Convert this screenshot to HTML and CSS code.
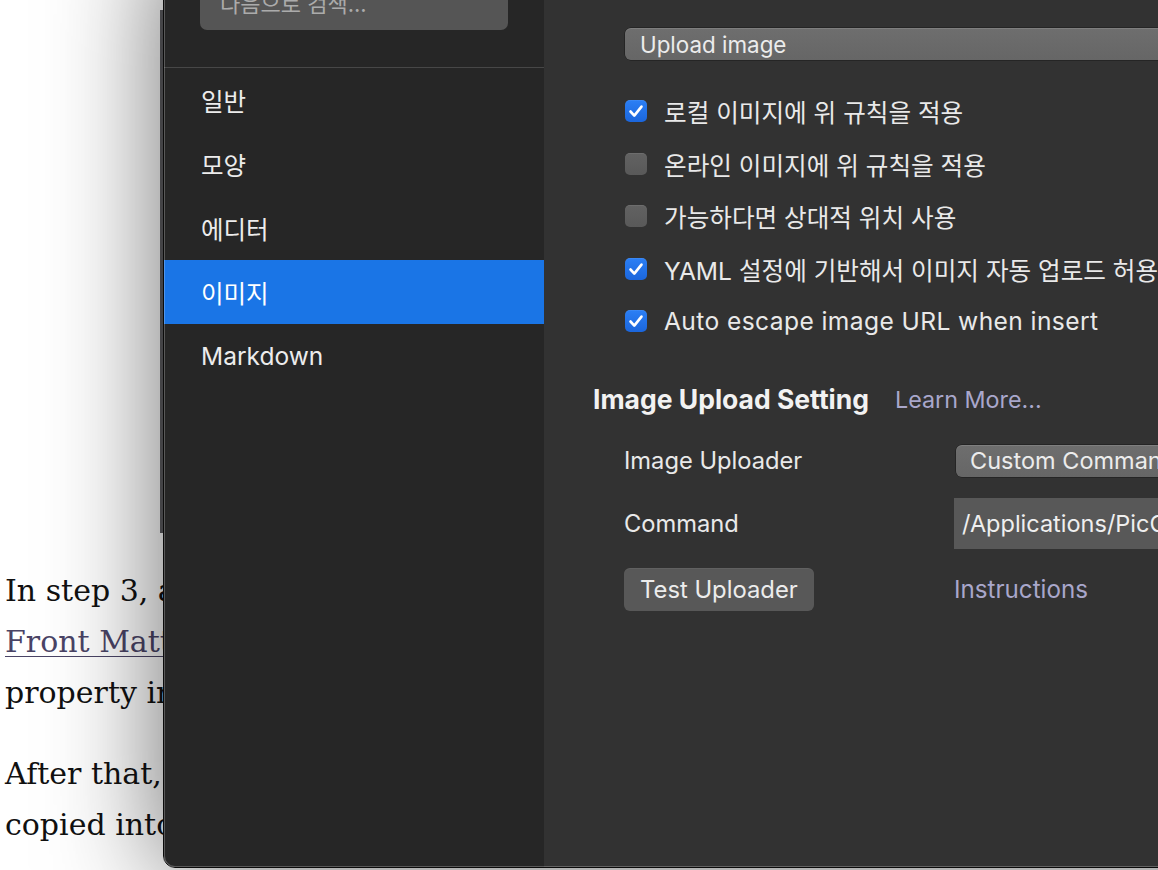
FILE: index.html
```html
<!DOCTYPE html>
<html lang="ko">
<head>
<meta charset="utf-8">
<title>Typora Preferences</title>
<link rel="stylesheet" href="styles.css">
</head>
<body>
<div class="page">
  <div class="strip"></div>
  <p class="para">In step 3, after images are uploaded, Typora reads the<br><a class="doc-link" href="#">Front Matter</a> of the document and checks the typora-copy-images-to<br>property in it, then applies the upload rules.</p>
  <p class="para">After that, images inserted into the document will be<br>copied into the configured folder and uploaded.</p>
</div>

<div class="window">
  <aside class="sidebar">
    <div class="search">다음으로 검색...</div>
    <div class="divider"></div>
    <nav class="nav">
      <div class="nav-item">일반</div>
      <div class="nav-item">모양</div>
      <div class="nav-item">에디터</div>
      <div class="nav-item active">이미지</div>
      <div class="nav-item">Markdown</div>
    </nav>
  </aside>
  <main class="content">
    <div class="cut-label">이미지를 삽입할 때...</div>
    <div class="select select-wide">Upload image</div>
    <ul class="checks">
      <li class="check-row"><span class="cb on"><svg viewBox="0 0 22 22" width="22" height="22"><path d="M5.5 11.5 L9.3 15.6 L16.5 6.6" fill="none" stroke="#fff" stroke-width="2.6" stroke-linecap="round" stroke-linejoin="round"/></svg></span><span class="check-label">로컬 이미지에 위 규칙을 적용</span></li>
      <li class="check-row"><span class="cb"></span><span class="check-label">온라인 이미지에 위 규칙을 적용</span></li>
      <li class="check-row"><span class="cb"></span><span class="check-label">가능하다면 상대적 위치 사용</span></li>
      <li class="check-row"><span class="cb on"><svg viewBox="0 0 22 22" width="22" height="22"><path d="M5.5 11.5 L9.3 15.6 L16.5 6.6" fill="none" stroke="#fff" stroke-width="2.6" stroke-linecap="round" stroke-linejoin="round"/></svg></span><span class="check-label">YAML 설정에 기반해서 이미지 자동 업로드 허용</span></li>
      <li class="check-row"><span class="cb on"><svg viewBox="0 0 22 22" width="22" height="22"><path d="M5.5 11.5 L9.3 15.6 L16.5 6.6" fill="none" stroke="#fff" stroke-width="2.6" stroke-linecap="round" stroke-linejoin="round"/></svg></span><span class="check-label check-label-latin">Auto escape image URL when insert</span></li>
    </ul>
    <div class="section-title"><span class="section-head">Image Upload Setting</span><a class="ui-link" href="#">Learn More...</a></div>
    <div class="group">
      <div class="grow grow-1"><div class="glabel">Image Uploader</div><div class="select select-cmd">Custom Command</div></div>
      <div class="grow grow-2"><div class="glabel">Command</div><div class="input">/Applications/PicGo.app/Contents/MacOS/PicGo</div></div>
      <div class="grow grow-3"><div class="glabel"><button class="btn">Test Uploader</button></div><a class="ui-link ui-link-lg" href="#">Instructions</a></div>
    </div>
  </main>
</div>
</body>
</html>
```

FILE: styles.css
```css
html, body {
  margin: 0;
  padding: 0;
  background: #ffffff;
  overflow: hidden;
  width: 1158px;
  height: 870px;
}

.page {
  padding-top: 10px;
  padding-left: 5px;
  font-family: "DejaVu Serif", "Liberation Serif", serif;
  font-size: 30px;
  line-height: 51px;
  color: #111111;
}

.strip {
  margin-left: 155px;
  width: 40px;
  height: 523px;
  background: #5e5e62;
}

.para {
  margin: 30px 0 0 0;
  white-space: nowrap;
}

.strip + .para {
  margin-top: 32px;
}

.doc-link {
  color: #4a4466;
  text-decoration: underline;
  text-decoration-thickness: 1px;
  text-underline-offset: 4px;
}

/* ---------- preferences window ---------- */
.window {
  position: absolute;
  left: 163px;
  top: -61px;
  width: 1200px;
  bottom: 2px;
  display: flex;
  border: 1px solid #0b0b0b;
  border-radius: 12px;
  overflow: hidden;
  box-shadow: -4px 6px 110px rgba(0, 0, 0, 0.55);
  font-family: "Inter", "Noto Sans CJK KR", sans-serif;
  color: #e9e9e9;
}

.window::after {
  content: "";
  position: absolute;
  inset: 0;
  border: 1px solid rgba(255, 255, 255, 0.24);
  border-radius: 11px;
  pointer-events: none;
}

.sidebar {
  width: 380px;
  flex: none;
  background: #262626;
  display: flex;
  flex-direction: column;
}

.search {
  margin: 38px 0 0 36px;
  width: 308px;
  height: 52px;
  box-sizing: border-box;
  padding: 11px 0 0 20px;
  background: #555555;
  border-radius: 7px;
  color: #ababab;
  font-size: 22px;
  line-height: 30px;
}

.divider {
  margin-top: 37px;
  height: 1px;
  background: #474747;
}

.nav {
  display: flex;
  flex-direction: column;
}

.nav-item {
  height: 64px;
  display: flex;
  align-items: center;
  padding-left: 37px;
  font-size: 24.5px;
  color: #ececec;
}

.nav-item.active {
  background: #1a75e6;
  color: #ffffff;
}

.content {
  flex: 1;
  background: #323232;
  padding: 33px 0 0 49px;
  display: flex;
  flex-direction: column;
  align-items: flex-start;
}

.cut-label {
  margin-left: 38px;
  font-size: 22px;
  line-height: 30px;
  color: #bdbdbd;
}

.select {
  height: 32px;
  box-sizing: border-box;
  display: flex;
  align-items: center;
  padding-left: 15px;
  background: linear-gradient(#6e6e6e, #666666);
  border-radius: 6px;
  box-shadow: inset 0 1px 0 rgba(255, 255, 255, 0.12), 0 0 0 0.5px rgba(0, 0, 0, 0.5);
  font-size: 22.4px;
  color: #ececec;
}

.select-wide {
  margin: 25px 0 0 32px;
  width: 700px;
}

.checks {
  list-style: none;
  margin: 25px 0 0 32px;
  padding: 0;
}

.check-row {
  height: 52.5px;
  display: flex;
  align-items: center;
  gap: 17px;
  font-size: 24.6px;
  white-space: nowrap;
}

.check-label-latin {
  letter-spacing: 0.4px;
}

.cb {
  width: 22px;
  height: 22px;
  flex: none;
  border-radius: 5px;
  background: linear-gradient(#626262, #595959);
  box-shadow: inset 0 0.5px 0 rgba(255, 255, 255, 0.15);
  display: flex;
}

.cb.on {
  background: linear-gradient(#2b7ff5, #1b66dc);
}

.section-title {
  margin-top: 34.5px;
  height: 34px;
  display: flex;
  align-items: center;
  gap: 26px;
  white-space: nowrap;
}

.section-head {
  font-size: 26.5px;
  font-weight: 700;
  color: #f2f2f2;
}

.ui-link {
  font-size: 23.3px;
  color: #a9a7cb;
  text-decoration: none;
}

.ui-link-lg {
  font-size: 24.2px;
}

.group {
  margin-left: 31px;
  display: flex;
  flex-direction: column;
}

.grow {
  display: flex;
  align-items: center;
  white-space: nowrap;
}

.glabel {
  width: 330px;
  flex: none;
  font-size: 23.7px;
}

.grow-1 {
  margin-top: 29px;
  height: 31px;
}

.grow-2 {
  margin-top: 22px;
  height: 51px;
}

.grow-3 {
  margin-top: 19px;
  height: 43px;
}

.select-cmd {
  margin-left: 2px;
  width: 320px;
  padding-left: 14px;
  font-size: 23.5px;
}

.input {
  align-self: stretch;
  width: 420px;
  display: flex;
  align-items: center;
  padding-left: 8px;
  background: #585858;
  font-size: 23.5px;
  color: #efefef;
}

.btn {
  height: 43px;
  padding: 0 16px;
  border: none;
  border-radius: 6px;
  background: #585858;
  color: #ececec;
  font-family: "Inter", "Noto Sans CJK KR", sans-serif;
  font-size: 23.8px;
  box-shadow: inset 0 1px 0 rgba(255, 255, 255, 0.06);
}
```
